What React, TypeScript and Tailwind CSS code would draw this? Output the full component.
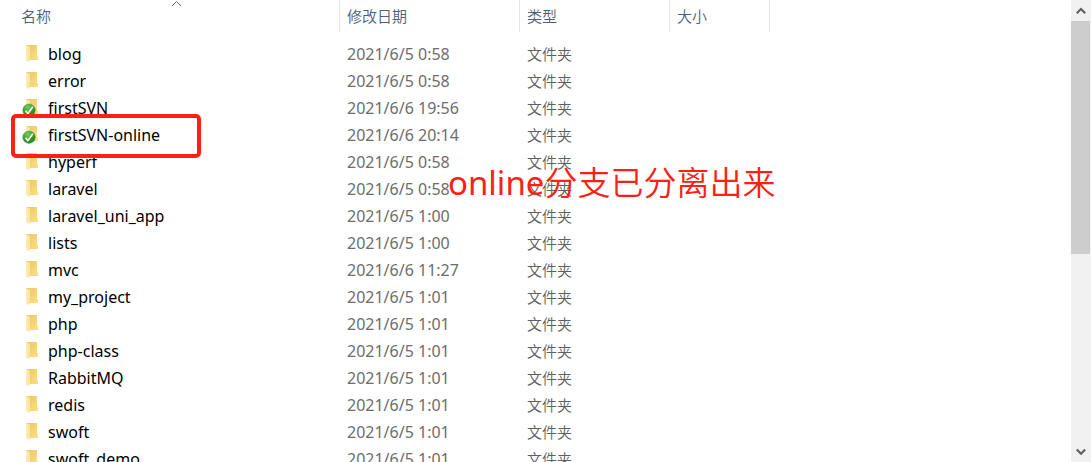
type Entry = { name: string; date: string; versioned?: boolean; marked?: boolean };

const entries: Entry[] = [
  { name: "blog", date: "2021/6/5 0:58" },
  { name: "error", date: "2021/6/5 0:58" },
  { name: "firstSVN", date: "2021/6/6 19:56", versioned: true },
  { name: "firstSVN-online", date: "2021/6/6 20:14", versioned: true, marked: true },
  { name: "hyperf", date: "2021/6/5 0:58" },
  { name: "laravel", date: "2021/6/5 0:58" },
  { name: "laravel_uni_app", date: "2021/6/5 1:00" },
  { name: "lists", date: "2021/6/5 1:00" },
  { name: "mvc", date: "2021/6/6 11:27" },
  { name: "my_project", date: "2021/6/5 1:01" },
  { name: "php", date: "2021/6/5 1:01" },
  { name: "php-class", date: "2021/6/5 1:01" },
  { name: "RabbitMQ", date: "2021/6/5 1:01" },
  { name: "redis", date: "2021/6/5 1:01" },
  { name: "swoft", date: "2021/6/5 1:01" },
  { name: "swoft_demo", date: "2021/6/5 1:01" },
];

function FolderIcon({ versioned }: { versioned?: boolean }) {
  return (
    <svg width="20" height="20" viewBox="0 0 20 20" className="shrink-0" aria-hidden="true">
      <defs>
        <linearGradient id="folder-back" x1="0" y1="0" x2="1" y2="1">
          <stop offset="0" stopColor="#e9c46c" />
          <stop offset="1" stopColor="#ffdf82" />
        </linearGradient>
        <linearGradient id="folder-front" x1="0" y1="0" x2="1" y2="0">
          <stop offset="0" stopColor="#ffeeb2" />
          <stop offset="1" stopColor="#fbe09a" />
        </linearGradient>
        <radialGradient id="badge" cx="0.4" cy="0.25" r="0.8">
          <stop offset="0" stopColor="#79c862" />
          <stop offset="0.55" stopColor="#379f2c" />
          <stop offset="1" stopColor="#1c7a1b" />
        </radialGradient>
      </defs>
      <path d="M4 1h11v11l1 .8V16H4z" fill="url(#folder-back)" />
      <path d="M4 1l4 1.8v13.4L6.8 18 4 16.4z" fill="url(#folder-front)" />
      {versioned && (
        <>
          <circle cx="7" cy="12.2" r="6.2" fill="url(#badge)" stroke="#3f9b38" strokeWidth="0.5" />
          <path d="M3.6 12.8L5.800 15.600L10.800 8.800" fill="none" stroke="#fff" strokeWidth="1.6" />
        </>
      )}
    </svg>
  );
}

function Chevron({ down }: { down?: boolean }) {
  return (
    <svg width="10" height="8" viewBox="0 0 10 8" fill="none" stroke="#606060" strokeWidth="2.2" aria-hidden="true">
      <path d={down ? "M.8 1.5L5 5.7l4.2-4.2" : "M.8 6.2L5 2l4.2 4.2"} />
    </svg>
  );
}

function Scrollbar() {
  return (
    <div className="flex w-5 shrink-0 flex-col bg-[#f0f0f0]">
      <button type="button" aria-label="向上滚动" className="flex h-[21px] items-center justify-center pr-px">
        <Chevron />
      </button>
      <div className="min-h-0 flex-1 pr-px">
        <div className="h-[55.5%] bg-[#cdcdcd]" />
      </div>
      <button type="button" aria-label="向下滚动" className="flex h-[21px] items-center justify-center pr-px">
        <Chevron down />
      </button>
    </div>
  );
}

const headCell = "relative h-8 border-r border-[#e5e5e5] p-0 text-left font-[350] text-[#4c607a]";

export default function App() {
  return (
    <div className="flex h-screen overflow-hidden bg-white font-['Noto_Sans','Noto_Sans_CJK_SC',sans-serif] text-[15px] leading-[27px]">
      <main className="relative min-w-0 flex-1 overflow-hidden">
        <table className="w-full table-fixed border-separate border-spacing-0">
          <colgroup>
            <col className="w-[340px]" />
            <col className="w-[180px]" />
            <col className="w-[150px]" />
            <col className="w-[100px]" />
            <col />
          </colgroup>
          <thead>
            <tr>
              <th className={headCell} aria-sort="ascending">
                <button type="button" className="block w-full pl-[21px] text-left">名称</button>
                <svg className="absolute top-0 left-[171px]" width="11" height="7" viewBox="0 0 11 7" fill="none" stroke="#666" aria-hidden="true">
                  <path d="M1 6l4.500-4.500L10 6" />
                </svg>
              </th>
              <th className={headCell}>
                <button type="button" className="block w-full pl-[7px] text-left">修改日期</button>
              </th>
              <th className={headCell}>
                <button type="button" className="block w-full pl-[7px] text-left">类型</button>
              </th>
              <th className={headCell}>
                <button type="button" className="block w-full pl-[7px] text-left">大小</button>
              </th>
              <td />
            </tr>
          </thead>
          <tbody className="before:block before:h-[9px]">
            {entries.map((e) => (
              <tr key={e.name}>
                <td className="relative p-0">
                  <div className="flex h-[27px] items-start pl-[22px]">
                    <div className="pt-[3px]">
                      <FolderIcon versioned={e.versioned} />
                    </div>
                    <span className="pl-1.5 text-[16px] text-black">{e.name}</span>
                  </div>
                  {e.marked && (
                    <div className="absolute -top-2 left-[11px] z-10 h-11 w-[190px] rounded-[5px] border-4 border-[#ff2015]" />
                  )}
                </td>
                <td className="p-0 pl-[7px] text-[16px] text-[#6d6d6d]">{e.date}</td>
                <td className="p-0 pl-[7px] font-[350] text-[#606060]">文件夹</td>
                <td className="p-0" />
                <td className="p-0" />
              </tr>
            ))}
          </tbody>
        </table>
        <p className="absolute top-[160px] left-[448px] text-[33px] leading-[46px] whitespace-nowrap text-[#ff2015]">
          online<span className="font-[350]">分支已分离出来</span>
        </p>
      </main>
      <Scrollbar />
    </div>
  );
}
